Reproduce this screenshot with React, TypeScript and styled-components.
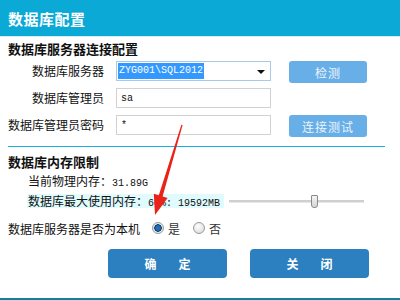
import React from 'react'
import styled, { createGlobalStyle } from 'styled-components'

const GlobalStyle = createGlobalStyle`
  html, body {
    margin: 0;
    padding: 0;
    background: #ffffff;
  }
  body {
    font-family: 'Noto Sans CJK SC', 'Noto Sans', sans-serif;
    font-size: 12px;
    color: #111;
  }
`

const Window = styled.div`
  position: relative;
  width: 400px;
  height: 300px;
  overflow: hidden;
  display: flex;
  flex-direction: column;
  background: #fff;
`

const TitleBar = styled.div`
  height: 37px;
  flex: none;
  display: flex;
  align-items: center;
  padding-left: 8px;
  background: #0aa9d6;
  border-bottom: 1px solid #d7eef6;
  box-sizing: border-box;
  color: #fff;
  font-size: 15px;
  font-weight: 700;
  letter-spacing: 0.5px;
`

const Content = styled.div`
  flex: 1;
  display: flex;
  flex-direction: column;
  padding: 4px 8px 0 8px;
`

const SectionTitle = styled.div<{ $gap: number }>`
  margin-top: ${({ $gap }) => $gap}px;
  height: 16px;
  line-height: 16px;
  font-size: 13px;
  font-weight: 700;
  color: #111;
`

const FormGrid = styled.div`
  margin-top: 4px;
  display: grid;
  grid-template-columns: 100px 155px 78px;
  grid-auto-rows: 20px;
  column-gap: 8px;
  row-gap: 7px;
  align-items: center;

  & > :nth-child(3n) {
    margin-left: 10px;
  }
`

const Label = styled.div`
  text-align: right;
  padding-right: 4px;
  white-space: nowrap;
  line-height: 20px;
`

const Field = styled.div<{ $focused?: boolean }>`
  position: relative;
  height: 20px;
  box-sizing: border-box;
  border: 1px solid ${({ $focused }) => ($focused ? '#a9c9e8' : '#d2d2d2')};
  background: #fff;
  display: flex;
  align-items: center;
  padding-left: 1px;
  font-family: 'Liberation Mono', 'DejaVu Sans Mono', monospace;
  font-size: 10px;
  color: #111;
`

const Selected = styled.span`
  background: #3399ff;
  color: #fff;
  padding: 2px 1px;
  line-height: 12px;
`

const PlainValue = styled.span`
  padding-left: 3px;
`

const DropArrow = styled.span`
  position: absolute;
  right: 5px;
  top: 8px;
  width: 0;
  height: 0;
  border-left: 4px solid transparent;
  border-right: 4px solid transparent;
  border-top: 4px solid #111;
`

const Empty = styled.div``

const SideButton = styled.div`
  align-self: start;
  height: 22px;
  width: 78px;
  border-radius: 3px;
  background: #69afe7;
  color: #eaf4fc;
  font-size: 12px;
  display: flex;
  align-items: center;
  justify-content: center;
  letter-spacing: 1px;
`

const Divider = styled.div`
  margin-top: 11px;
  margin-right: 7px;
  height: 1px;
  background: #18b1de;
`

const InfoLine = styled.div<{ $gap: number }>`
  margin-top: ${({ $gap }) => $gap}px;
  padding-left: 20px;
  height: 16px;
  line-height: 16px;
  white-space: nowrap;
`

const Mono = styled.span`
  font-family: 'Liberation Mono', 'DejaVu Sans Mono', monospace;
  font-size: 10px;
`

const LimitRow = styled.div`
  margin-top: 5px;
  height: 14px;
  display: flex;
  align-items: center;
  padding-left: 19px;
`

const Highlight = styled.span`
  background: #e0fbfe;
  height: 14px;
  line-height: 14px;
  padding: 0 4px 0 1px;
  white-space: nowrap;
`

const Slider = styled.div`
  position: relative;
  margin-left: 5px;
  width: 135px;
  height: 14px;
  display: flex;
  align-items: center;
`

const Track = styled.div`
  width: 100%;
  height: 2px;
  background: #cfcfcf;
  border-bottom: 1px solid #e8e8e8;
`

const Thumb = styled.div`
  position: absolute;
  left: 82px;
  top: 1px;
  width: 5px;
  height: 11px;
  border: 1px solid #8a8a8a;
  border-radius: 1px 1px 3px 3px;
  background: linear-gradient(#f4f4f4, #d6d6d6);
`

const RadioRow = styled.div`
  margin-top: 12px;
  height: 16px;
  display: flex;
  align-items: center;
  white-space: nowrap;
`

const RadioGroup = styled.div`
  margin-left: 12px;
  display: flex;
  align-items: center;
  gap: 13px;
`

const RadioItem = styled.label`
  display: flex;
  align-items: center;
  gap: 4px;
  color: #333;
`

const RadioDot = styled.span<{ $checked?: boolean }>`
  width: 12px;
  height: 12px;
  border-radius: 50%;
  box-sizing: border-box;
  border: 1px solid #9a9a9a;
  background: ${({ $checked }) =>
    $checked
      ? 'radial-gradient(circle, #1e6fb6 0 2.5px, #0f3f6a 3px 3.5px, #e8e8e8 4px)'
      : 'radial-gradient(circle at 40% 35%, #ffffff, #d4d4d4)'};
`

const ActionRow = styled.div`
  margin-top: 13px;
  padding-left: 100px;
  display: flex;
  gap: 23px;
`

const ActionButton = styled.div`
  width: 119px;
  height: 29px;
  border-radius: 4px;
  background: #2c80bf;
  color: #fff;
  font-size: 12px;
  font-weight: 700;
  letter-spacing: 22px;
  padding-left: 22px;
  box-sizing: border-box;
  display: flex;
  align-items: center;
  justify-content: center;
`

const BottomLine = styled.div`
  margin-top: auto;
  height: 2px;
  background: #1a7d9e;
`

const ArrowLayer = styled.svg`
  position: absolute;
  left: 0;
  top: 0;
  pointer-events: none;
`

export default function App() {
  return (
    <>
      <GlobalStyle />
      <Window>
        <TitleBar>数据库配置</TitleBar>
        <Content>
          <SectionTitle $gap={0}>数据库服务器连接配置</SectionTitle>
          <FormGrid>
            <Label>数据库服务器</Label>
            <Field $focused>
              <Selected>ZYG001\SQL2012</Selected>
              <DropArrow />
            </Field>
            <SideButton>检测</SideButton>

            <Label>数据库管理员</Label>
            <Field>
              <PlainValue>sa</PlainValue>
            </Field>
            <Empty />

            <Label>数据库管理员密码</Label>
            <Field>
              <PlainValue>*</PlainValue>
            </Field>
            <SideButton>连接测试</SideButton>
          </FormGrid>
          <Divider />

          <SectionTitle $gap={7}>数据库内存限制</SectionTitle>
          <InfoLine $gap={3}>
            当前物理内存：<Mono>31.89G</Mono>
          </InfoLine>
          <LimitRow>
            <Highlight>
              数据库最大使用内存：<Mono>60%: 19592MB</Mono>
            </Highlight>
            <Slider>
              <Track />
              <Thumb />
            </Slider>
          </LimitRow>
          <RadioRow>
            数据库服务器是否为本机
            <RadioGroup>
              <RadioItem>
                <RadioDot $checked />是
              </RadioItem>
              <RadioItem>
                <RadioDot />否
              </RadioItem>
            </RadioGroup>
          </RadioRow>
          <ActionRow>
            <ActionButton>确定</ActionButton>
            <ActionButton>关闭</ActionButton>
          </ActionRow>
        </Content>
        <BottomLine />
        <ArrowLayer width="400" height="300" viewBox="0 0 400 300">
          <polygon
            points="182.6,125.1 162.6,196.4 167.6,197.9 155,215 153.8,193.7 158.8,195.2 181.4,124.8"
            fill="#ea2218"
          />
        </ArrowLayer>
      </Window>
    </>
  )
}
